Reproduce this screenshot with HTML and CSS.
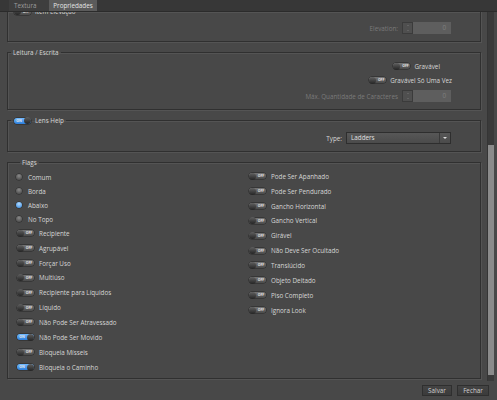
FILE: index.html
```html
<!DOCTYPE html>
<html lang="pt">
<head>
  <meta charset="UTF-8">
  <title>Propriedades</title>
  <link rel="stylesheet" href="styles.css">
</head>
<body>

<div class="window">
  <div class="tabs">
    <div class="tab first">Textura</div>
    <div class="tab active">Propriedades</div>
  </div>

  <div class="main">
    <div class="viewport">
      <div class="content">

        <fieldset class="group single">
          <legend><span class="toggle off"><span class="knob"></span><span class="state">OFF</span></span>Item Elevação</legend>
          <div class="line">
            <span class="disabled">Elevation:</span>
            <span class="spin"><span class="arrows"><i class="up"></i><i class="down"></i></span><span class="value">0</span></span>
          </div>
        </fieldset>

        <fieldset class="group">
          <legend>Leitura / Escrita</legend>
          <div class="line check short"><span class="toggle off"><span class="knob"></span><span class="state">OFF</span></span>Gravável</div>
          <div class="line check long"><span class="toggle off"><span class="knob"></span><span class="state">OFF</span></span>Gravável Só Uma Vez</div>
          <div class="line spaced">
            <span class="disabled">Máx. Quantidade de Caracteres</span>
            <span class="spin"><span class="arrows"><i class="up"></i><i class="down"></i></span><span class="value">0</span></span>
          </div>
        </fieldset>

        <fieldset class="group single">
          <legend><span class="toggle on"><span class="knob"></span><span class="state">ON</span></span>Lens Help</legend>
          <div class="line">
            <span>Type:</span>
            <span class="combo"><span class="text">Ladders</span><span class="drop"></span></span>
          </div>
        </fieldset>

        <fieldset class="group flags">
          <legend>Flags</legend>
          <div class="columns">
            <div class="column left">
              <div class="item choice"><span class="radio"></span>Comum</div>
              <div class="item choice"><span class="radio"></span>Borda</div>
              <div class="item choice"><span class="radio checked"></span>Abaixo</div>
              <div class="item choice"><span class="radio"></span>No Topo</div>
              <div class="item"><span class="toggle off"><span class="knob"></span><span class="state">OFF</span></span>Recipiente</div>
              <div class="item"><span class="toggle off"><span class="knob"></span><span class="state">OFF</span></span>Agrupável</div>
              <div class="item"><span class="toggle off"><span class="knob"></span><span class="state">OFF</span></span>Forçar Uso</div>
              <div class="item"><span class="toggle off"><span class="knob"></span><span class="state">OFF</span></span>Multiúso</div>
              <div class="item"><span class="toggle off"><span class="knob"></span><span class="state">OFF</span></span>Recipiente para Líquidos</div>
              <div class="item"><span class="toggle off"><span class="knob"></span><span class="state">OFF</span></span>Líquido</div>
              <div class="item"><span class="toggle off"><span class="knob"></span><span class="state">OFF</span></span>Não Pode Ser Atravessado</div>
              <div class="item"><span class="toggle on"><span class="knob"></span><span class="state">ON</span></span>Não Pode Ser Movido</div>
              <div class="item"><span class="toggle off"><span class="knob"></span><span class="state">OFF</span></span>Bloqueia Mísseis</div>
              <div class="item"><span class="toggle on"><span class="knob"></span><span class="state">ON</span></span>Bloqueia o Caminho</div>
            </div>
            <div class="column">
              <div class="item"><span class="toggle off"><span class="knob"></span><span class="state">OFF</span></span>Pode Ser Apanhado</div>
              <div class="item"><span class="toggle off"><span class="knob"></span><span class="state">OFF</span></span>Pode Ser Pendurado</div>
              <div class="item"><span class="toggle off"><span class="knob"></span><span class="state">OFF</span></span>Gancho Horizontal</div>
              <div class="item"><span class="toggle off"><span class="knob"></span><span class="state">OFF</span></span>Gancho Vertical</div>
              <div class="item"><span class="toggle off"><span class="knob"></span><span class="state">OFF</span></span>Girável</div>
              <div class="item"><span class="toggle off"><span class="knob"></span><span class="state">OFF</span></span>Não Deve Ser Ocultado</div>
              <div class="item"><span class="toggle off"><span class="knob"></span><span class="state">OFF</span></span>Translúcido</div>
              <div class="item"><span class="toggle off"><span class="knob"></span><span class="state">OFF</span></span>Objeto Deitado</div>
              <div class="item"><span class="toggle off"><span class="knob"></span><span class="state">OFF</span></span>Piso Completo</div>
              <div class="item"><span class="toggle off"><span class="knob"></span><span class="state">OFF</span></span>Ignora Look</div>
            </div>
          </div>
        </fieldset>

      </div>
    </div>
    <div class="scrollbar">
      <div class="thumb"></div>
    </div>
  </div>

  <div class="footer">
    <div class="button save">Salvar</div>
    <div class="button close">Fechar</div>
  </div>
</div>

</body>
</html>
```

FILE: styles.css
```css
body {
  margin: 0;
  background-color: #484848;
  font-family: 'Open Sans', sans-serif;
  font-size: 6.3px;
  color: #d6d6d6;
}
.window {
  width: 497px;
  height: 400px;
  display: flex;
  flex-direction: column;
}

/* tabs */
.tabs {
  position: relative;
  z-index: 1;
  display: flex;
  height: 11px;
  padding-left: 9px;
  background-color: #373737;
  border-bottom: 1px solid #2b2b2b;
}
.tab {
  line-height: 11px;
  background-color: #3e3e3e;
  color: #9c9c9c;
}
.tab.first {
  width: 35px;
  padding-left: 5px;
}
.tab.active {
  width: 48px;
  text-align: center;
  background-color: #5b5b5b;
  color: #e4e4e4;
}

/* scroll area */
.main {
  display: flex;
  height: 369px;
}
.viewport {
  flex: 1;
  overflow: hidden;
}
.content {
  margin-top: -6px;
}
.scrollbar {
  width: 7px;
  margin-right: 3px;
  background-color: #3a3a3a;
  border-left: 1px solid #353535;
  box-sizing: border-box;
  display: flex;
  flex-direction: column;
}
.thumb {
  margin-top: 133px;
  height: 230px;
  background-color: #8b8b8b;
}

/* group boxes */
.group {
  margin: 0 6px 5px 7px;
  padding: 0 0 7px 0;
  border: 1px solid #303030;
  box-shadow: 1px 1px 0 #545454, inset 1px 1px 0 #545454;
  min-width: 0;
}
.group legend {
  height: 11px;
  line-height: 11px;
  margin-left: 3px;
  padding: 0 2px;
  display: flex;
  align-items: center;
  gap: 4px;
}
.group legend .toggle {
  margin-left: 1px;
}
.group.single {
  padding-top: 6px;
}
.content > .group:first-child {
  padding-top: 5px;
}
.group.flags {
  padding: 1px 0 4px 9px;
}

.line {
  display: flex;
  justify-content: flex-end;
  align-items: center;
  gap: 4px;
  padding-right: 29px;
}
.line.check {
  height: 14px;
}
.line.short {
  margin-top: 1px;
  padding-right: 40px;
}
.line.long {
  padding-right: 28px;
}
.line.spaced {
  margin-top: 3px;
}
.disabled {
  color: #7a7a7a;
}

/* switches and radios */
.toggle {
  display: inline-flex;
  align-items: center;
  flex-shrink: 0;
  width: 17px;
  height: 6px;
  border-radius: 3px;
  background: linear-gradient(#767676, #4a4a4a);
  box-shadow: 0 0 0 0.5px #262626;
}
.toggle .knob {
  width: 7px;
  height: 7px;
  border-radius: 50%;
  background: linear-gradient(#606060, #242424);
}
.toggle .state {
  flex: 1;
  text-align: center;
  font-size: 3.4px;
  font-weight: bold;
  line-height: 6px;
  color: #e6e6e6;
}
.toggle.on {
  background: linear-gradient(#72baff, #2b7ddb);
}
.toggle.on .knob {
  order: 2;
}
.radio {
  width: 6px;
  height: 6px;
  margin-left: -1px;
  margin-right: 1px;
  border-radius: 50%;
  background: radial-gradient(circle at 50% 30%, #8a8a8a, #3e3e3e);
  box-shadow: 0 0 0 0.5px #2a2a2a;
}
.radio.checked {
  background: radial-gradient(circle at 50% 30%, #b4dcff, #2f86e0);
}

/* inputs */
.spin {
  display: flex;
  width: 49px;
  height: 12px;
}
.spin .arrows {
  width: 9px;
  display: flex;
  flex-direction: column;
  border: 1px solid #3b3b3b;
  background-color: #4f4f4f;
}
.spin .arrows i {
  flex: 1;
  display: flex;
  align-items: center;
  justify-content: center;
}
.spin .arrows i::after {
  content: "";
  border-left: 1.5px solid transparent;
  border-right: 1.5px solid transparent;
}
.spin .arrows .up::after {
  border-bottom: 1.5px solid #777;
}
.spin .arrows .down::after {
  border-top: 1.5px solid #777;
}
.spin .value {
  flex: 1;
  padding-right: 5px;
  text-align: right;
  line-height: 12px;
  background-color: #5e5e5e;
  color: #7e7e7e;
}
.combo {
  display: flex;
  width: 105px;
  height: 12px;
  box-sizing: border-box;
  border: 1px solid #2e2e2e;
  background: linear-gradient(#575757, #4b4b4b);
}
.combo .text {
  flex: 1;
  padding-left: 4px;
  line-height: 10px;
  color: #e0e0e0;
}
.combo .drop {
  width: 10px;
  display: flex;
  align-items: center;
  justify-content: center;
  border-left: 1px solid #393939;
}
.combo .drop::after {
  content: "";
  border-left: 2px solid transparent;
  border-right: 2px solid transparent;
  border-top: 2px solid #dcdcdc;
}

/* flags */
.columns {
  display: grid;
  grid-template-columns: 232px 1fr;
  align-items: start;
}
.column {
  display: flex;
  flex-direction: column;
}
.column.left {
  margin-top: 1px;
}
.item {
  display: flex;
  align-items: center;
  gap: 5px;
  height: 14.85px;
}
.item.choice {
  height: 14px;
}

/* footer */
.footer {
  height: 19px;
  display: flex;
  justify-content: flex-end;
  align-items: center;
  gap: 5px;
  padding-right: 8px;
}
.button {
  height: 11px;
  box-sizing: border-box;
  line-height: 9px;
  text-align: center;
  border: 1px solid #2f2f2f;
  background: linear-gradient(#444, #3b3b3b);
  color: #cfcfcf;
}
.button.save {
  width: 30px;
}
.button.close {
  width: 32px;
}
```
